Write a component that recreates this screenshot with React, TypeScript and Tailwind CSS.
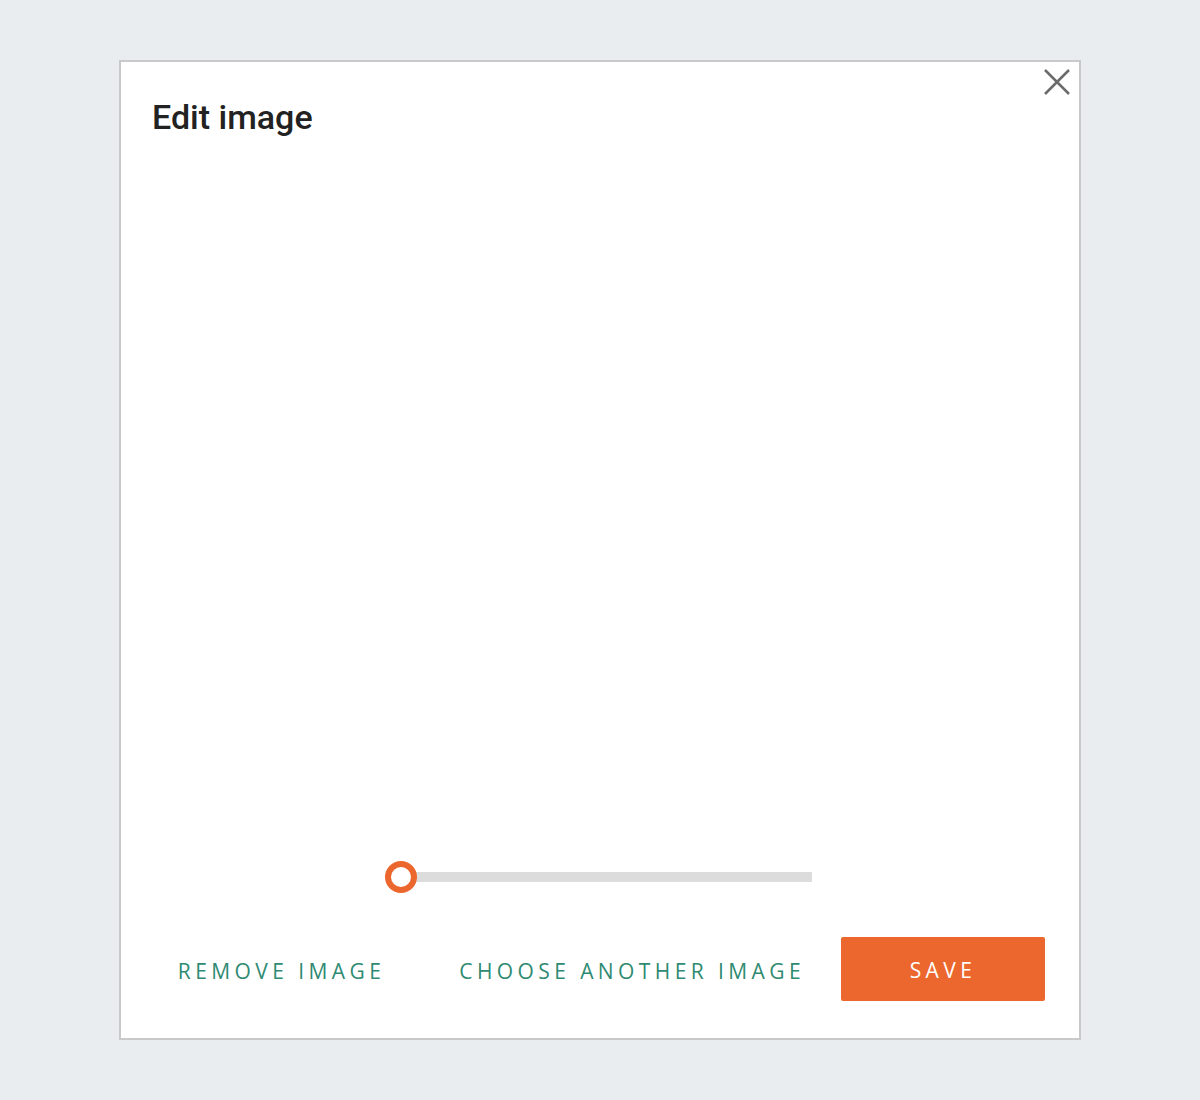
import { useState } from 'react';

export default function App() {
  const [zoom, setZoom] = useState(0);

  return (
    <div className="min-h-[1100px] bg-[#e9edf0] pt-[60px] pl-[119px]">
      <div className="relative flex h-[980px] w-[962px] flex-col border-2 border-[#c9c9cb] bg-white">
        {/* cerrar */}
        <button className="absolute right-[4px] top-[2px] p-1 text-[#6b6b6b]" aria-label="Close">
          <svg width="28" height="28" viewBox="0 0 28 28" fill="none" stroke="currentColor" strokeWidth="2.5">
            <path d="M2 2 L26 26 M26 2 L2 26" />
          </svg>
        </button>

        <h2 className="pl-[31px] pt-[34px] font-['Roboto',sans-serif] text-[34px] font-medium leading-[42px] text-[#222]">
          Edit image
        </h2>

        <div className="flex-1" />

        {/* slider de zoom */}
        <div className="pl-[264px]">
          <div className="relative h-[32px] w-[427px]">
            <div className="absolute left-[16px] right-0 top-[11px] h-[10px] bg-[#dcdcdc]" />
            <input
              type="range"
              min={0}
              max={100}
              value={zoom}
              onChange={(e) => setZoom(Number(e.target.value))}
              className="absolute inset-0 opacity-0"
            />
            <div
              className="pointer-events-none absolute top-0 h-[32px] w-[32px] rounded-full border-[6px] border-[#ec672d] bg-white"
              style={{ left: `${(zoom / 100) * 395}px` }}
            />
          </div>
        </div>

        <div className="mt-[44px] flex items-center justify-end gap-[16px] pb-[37px] pr-[34px] font-['Open_Sans',sans-serif] text-[21px] tracking-[0.21em]">
          <button className="px-5 pt-[13px] pb-[7px] uppercase text-[#2f8a72]">Remove image</button>
          <button className="ml-[18px] px-5 pt-[13px] pb-[7px] uppercase text-[#2f8a72]">Choose another image</button>
          <button className="h-[64px] w-[204px] rounded-[2px] bg-[#ec672d] pt-[4px] uppercase text-white">Save</button>
        </div>
      </div>
    </div>
  );
}
